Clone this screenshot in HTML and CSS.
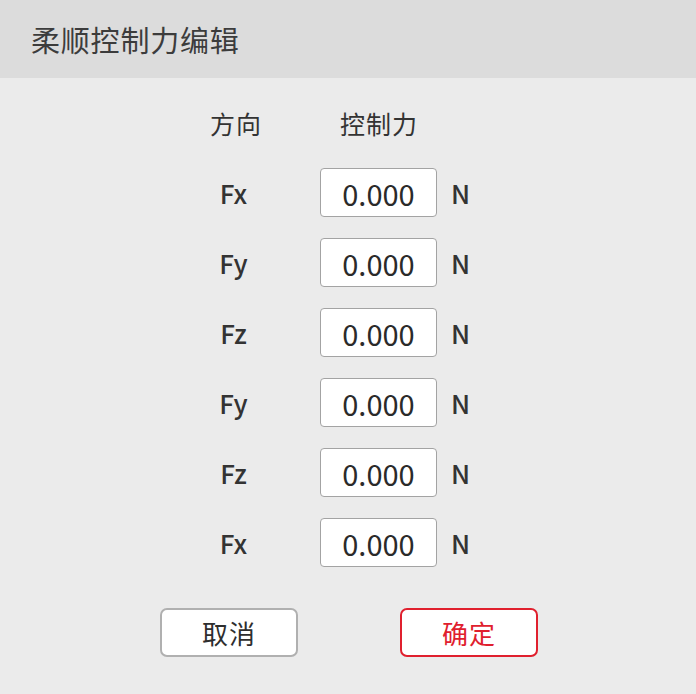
FILE: index.html
```html
<!DOCTYPE html>
<html lang="zh-CN">
<head>
<meta charset="utf-8">
<title>柔顺控制力编辑</title>
<link rel="stylesheet" href="styles.css">
</head>
<body>
<div class="dialog">
  <div class="dialog-header">柔顺控制力编辑</div>
  <div class="dialog-body">
    <div class="force-grid">
      <div class="col-head">方向</div>
      <div class="col-head">控制力</div>
      <div></div>

      <div class="axis">Fx</div>
      <div class="field">0.000</div>
      <div class="unit">N</div>

      <div class="axis">Fy</div>
      <div class="field">0.000</div>
      <div class="unit">N</div>

      <div class="axis">Fz</div>
      <div class="field">0.000</div>
      <div class="unit">N</div>

      <div class="axis">Fy</div>
      <div class="field">0.000</div>
      <div class="unit">N</div>

      <div class="axis">Fz</div>
      <div class="field">0.000</div>
      <div class="unit">N</div>

      <div class="axis">Fx</div>
      <div class="field">0.000</div>
      <div class="unit">N</div>
    </div>
    <div class="actions">
      <button class="btn btn-cancel">取消</button>
      <button class="btn btn-ok">确定</button>
    </div>
  </div>
</div>
</body>
</html>
```
FILE: styles.css
```css
html, body {
  margin: 0;
  padding: 0;
}
body {
  width: 696px;
  height: 694px;
  background: #ebebeb;
  font-family: "Noto Sans CJK SC", "Noto Sans", sans-serif;
  color: #333333;
  overflow: hidden;
}
.dialog {
  display: flex;
  flex-direction: column;
  height: 694px;
}
.dialog-header {
  height: 78px;
  background: #dcdcdc;
  display: flex;
  align-items: center;
  padding-left: 31px;
  font-size: 29px;
  color: #3c3c3c;
  letter-spacing: 0.8px;
}
.dialog-body {
  flex: 1;
  padding-top: 20px;
}
.force-grid {
  display: grid;
  grid-template-columns: 120px 118px auto;
  grid-auto-rows: 49px;
  column-gap: 24px;
  row-gap: 21px;
  padding-left: 175px;
  align-items: center;
}
.col-head {
  font-size: 25px;
  text-align: center;
  letter-spacing: 1px;
  padding-left: 2px;
}
.axis {
  font-size: 26px;
  font-weight: 500;
  text-align: center;
  padding-right: 3px;
}
.field {
  box-sizing: border-box;
  height: 49px;
  margin-left: 1px;
  background: #ffffff;
  border: 1.5px solid #a3a3a3;
  border-radius: 4px;
  display: flex;
  align-items: center;
  justify-content: center;
  font-size: 29px;
  color: #2a2a2a;
}
.unit {
  font-size: 26px;
  font-weight: 500;
  margin-left: -10px;
}
.actions {
  display: flex;
  justify-content: center;
  gap: 102px;
  margin-top: 41px;
  padding-left: 2px;
}
.btn {
  box-sizing: border-box;
  width: 138px;
  height: 49px;
  border-radius: 7px;
  background: #ffffff;
  font-family: "Noto Sans CJK SC", "Noto Sans", sans-serif;
  font-size: 26px;
  padding: 0;
  letter-spacing: 1px;
}
.btn-cancel {
  border: 2px solid #b0b0b0;
  color: #2e2e2e;
}
.btn-ok {
  border: 2px solid #e0202e;
  color: #e0202e;
}
```
